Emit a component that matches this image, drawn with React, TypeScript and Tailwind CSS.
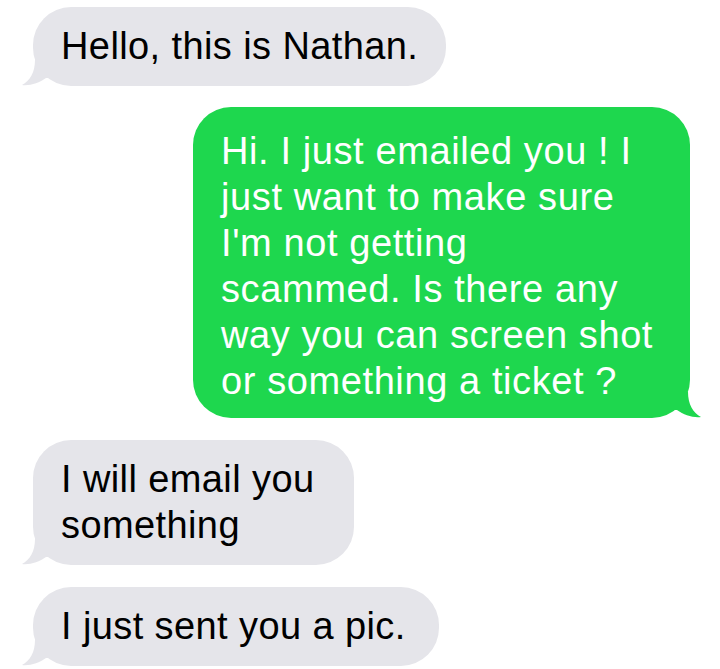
import React from "react";

function LeftTail({ color }: { color: string }) {
  return (
    <svg
      className="absolute bottom-0 left-[-12px]"
      width="34"
      height="26"
      viewBox="0 0 34 26"
    >
      <path
        d="M14 0 C14 12 9 21 1 25 C9 26 18 23 25 18 L34 18 L34 0 Z"
        fill={color}
      />
    </svg>
  );
}

function RightTail({ color }: { color: string }) {
  return (
    <svg
      className="absolute bottom-0 right-[-12px]"
      width="34"
      height="26"
      viewBox="0 0 34 26"
    >
      <path
        d="M20 0 C20 12 25 21 33 25 C25 26 16 23 9 18 L0 18 L0 0 Z"
        fill={color}
      />
    </svg>
  );
}

function Gray({ lines, pr }: { lines: string[]; pr: string }) {
  return (
    <div
      className={`relative self-start ml-[33px] rounded-[38px] bg-[#e5e5ea] pl-7 ${pr} pt-4 pb-[17px] text-black`}
    >
      <LeftTail color="#e5e5ea" />
      <div className="relative">
        {lines.map((l, i) => (
          <div key={i} className="whitespace-nowrap">
            {l}
          </div>
        ))}
      </div>
    </div>
  );
}

export default function App() {
  const green = [
    "Hi. I just emailed you ! I",
    "just want to make sure",
    "I'm not getting",
    "scammed. Is there any",
    "way you can screen shot",
    "or something a ticket ?",
  ];
  return (
    <div
      className="w-[720px] h-[669px] bg-white overflow-hidden flex flex-col pt-[7px] text-[38px] leading-[46px] tracking-[0.4px]"
      style={{ fontFamily: '"Liberation Sans", Arial, sans-serif' }}
    >
      <Gray lines={["Hello, this is Nathan."]} pr="pr-7" />
      <div className="relative self-start ml-[193px] mt-[21px] w-[497px] rounded-[38px] bg-[#1ed74e] pl-7 pr-4 pt-[21px] pb-[14px] text-white tracking-[0.6px]">
        <RightTail color="#1ed74e" />
        <div className="relative">
          {green.map((l, i) => (
            <div key={i} className="whitespace-nowrap">
              {l}
            </div>
          ))}
        </div>
      </div>
      <div className="mt-[22px] flex flex-col">
        <Gray lines={["I will email you", "something"]} pr="pr-[40px]" />
      </div>
      <div className="mt-[22px] flex flex-col">
        <Gray lines={["I just sent you a pic."]} pr="pr-[33px]" />
      </div>
    </div>
  );
}
